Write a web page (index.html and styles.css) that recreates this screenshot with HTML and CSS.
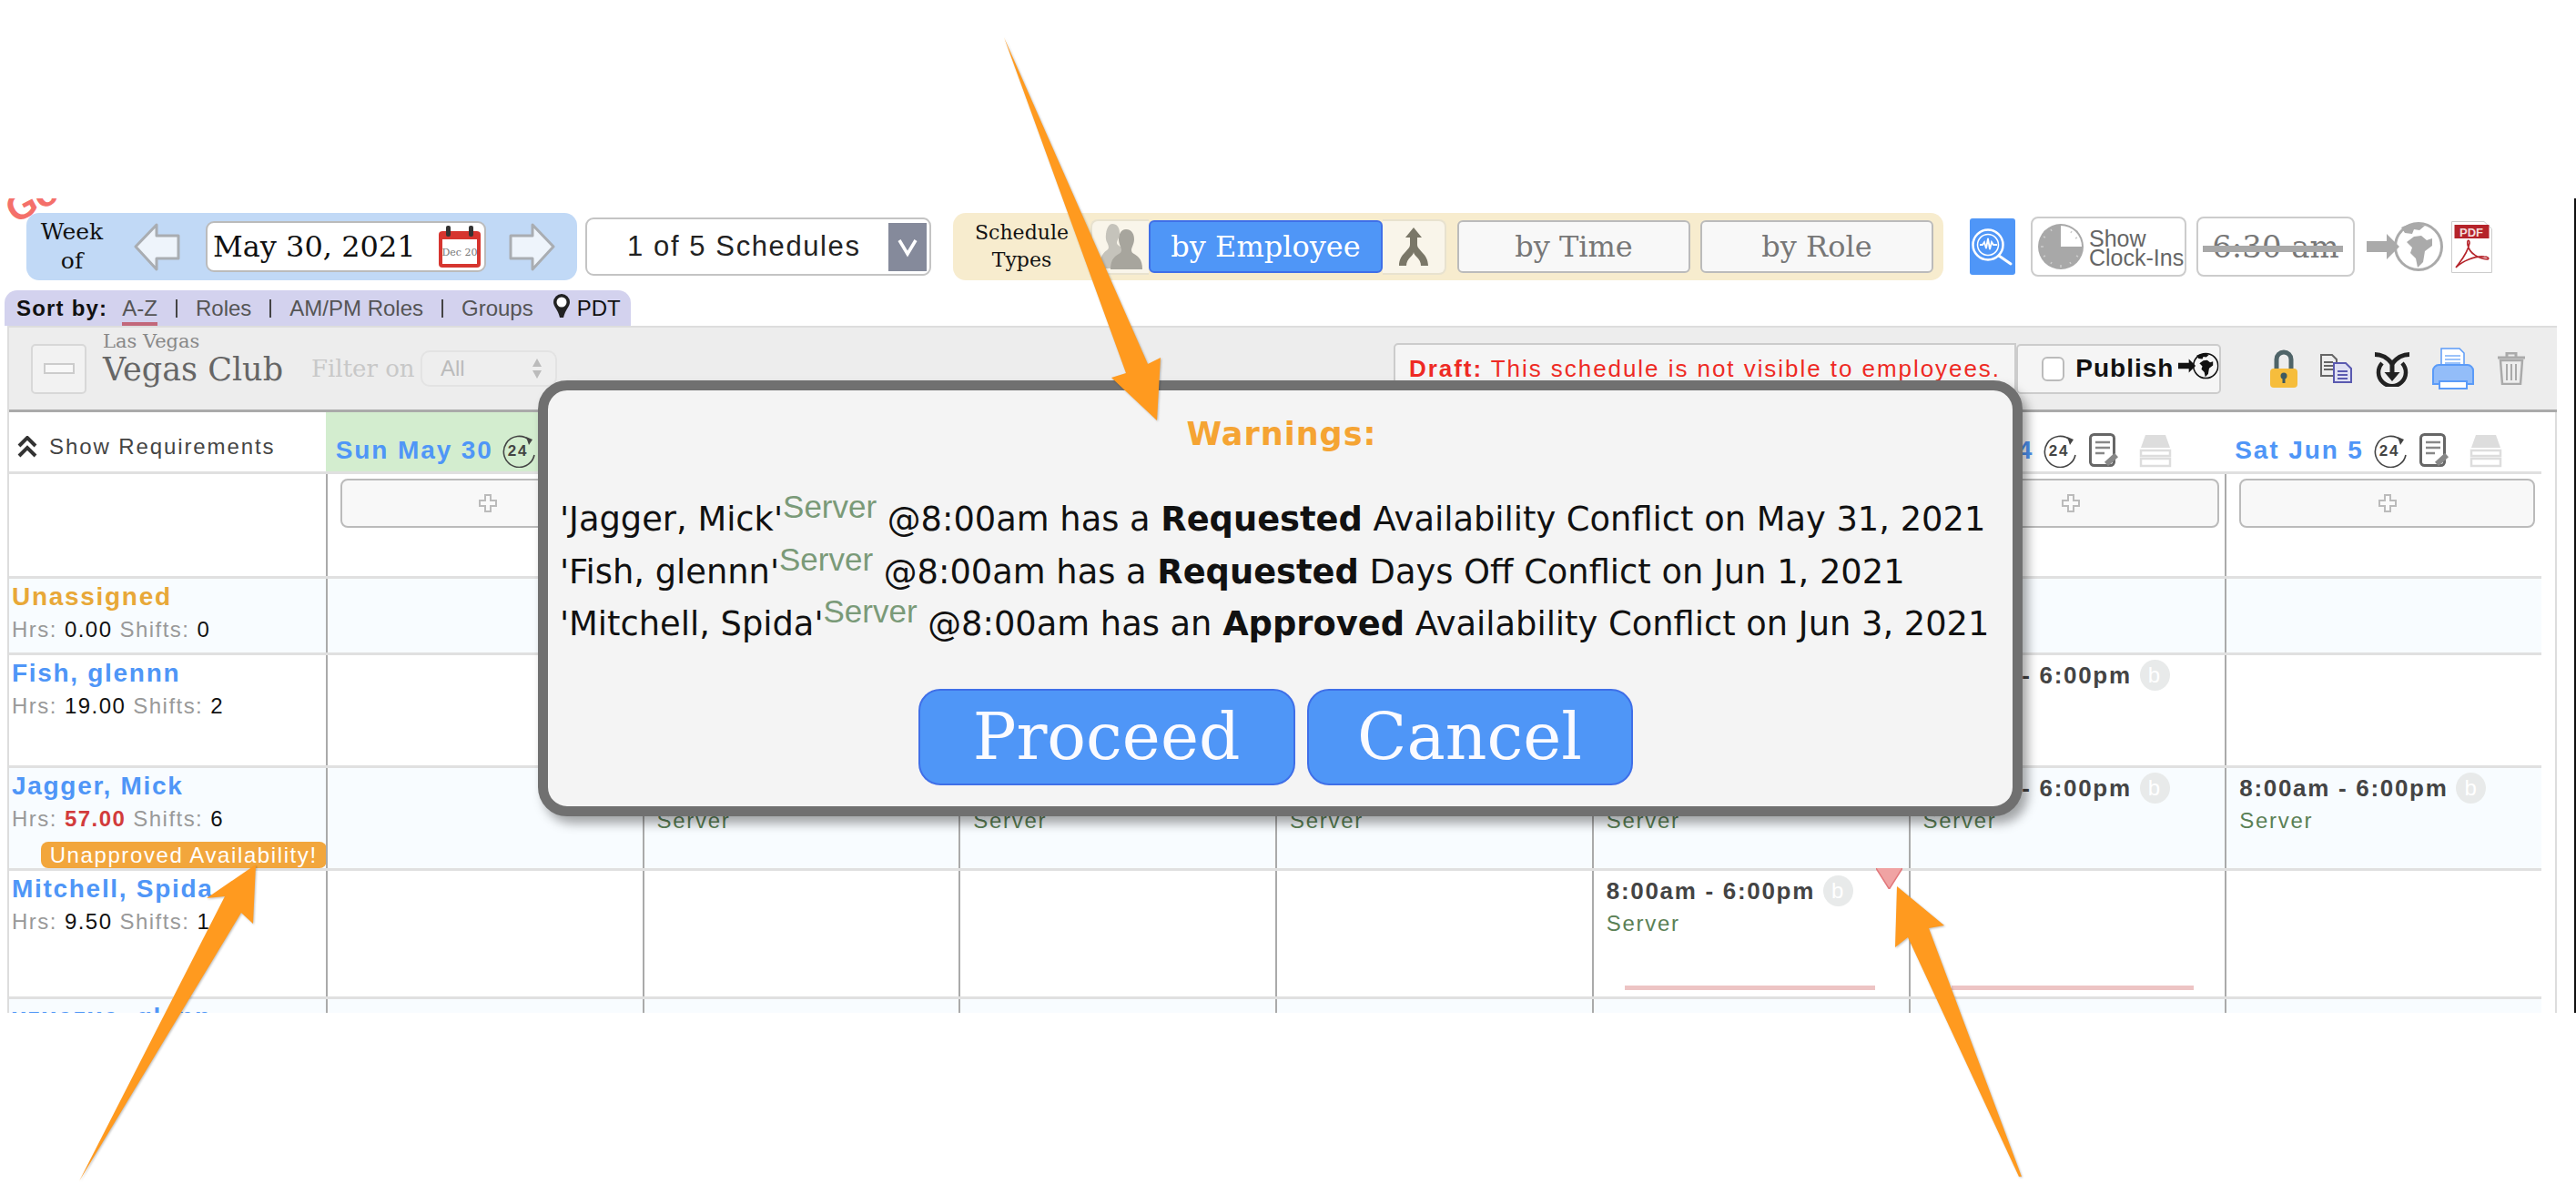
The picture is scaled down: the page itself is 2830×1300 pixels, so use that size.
FILE: index.html
```html
<!DOCTYPE html>
<html lang="en">
  <head>
    <meta charset="UTF-8" />
    <title>Schedule warnings</title>
    <link rel="stylesheet" href="styles.css">
  </head>
  <body>
    <svg class="defs" width="0" height="0">
      <defs>
        <symbol id="globe" viewBox="0 0 84 54">
          <path d="M0 21h22v-8l14 14-14 14v-8H0z" fill="currentColor" />
          <circle cx="57" cy="27" r="25.500" fill="none" stroke="currentColor" stroke-width="3" />
          <path d="M38 6c6-4 18-5 26-2l-6 5-6-1-2 5-8-1zM44 22l8-6 8-1 6 5 6-2v8l-8 6-2 12-6 6-2-10-6-6 2-6z" fill="currentColor" />
        </symbol>
        <symbol id="clock24" viewBox="0 0 38 38">
          <path d="M31 8A17 17 0 1 0 36 24" fill="none" stroke="#444" stroke-width="1.600" />
          <path d="M27 4l7 3-4 6z" fill="#444" />
          <text x="18" y="25" text-anchor="middle" class="clock-num">24</text>
        </symbol>
        <symbol id="doc" viewBox="0 0 34 38">
          <rect x="1.500" y="1.500" width="26" height="34" rx="4" fill="#fff" stroke="#666" stroke-width="3" />
          <path d="M7 10h16M7 16h16M7 22h10" stroke="#888" stroke-width="2.500" />
          <path d="M19 34l11-10" stroke="#888" stroke-width="6" />
        </symbol>
        <symbol id="stack" viewBox="0 0 36 38">
          <path d="M7 2h22l5 14H2z" fill="#ddd" />
          <path d="M2 19h32v6H2zM2 28h32v8H2z" fill="#fff" stroke="#ddd" stroke-width="2.500" />
        </symbol>
        <symbol id="plus" viewBox="0 0 22 22">
          <path d="M8 2h6v6h6v6h-6v6H8v-6H2V8h6z" fill="#fafafa" stroke="#bbb" stroke-width="2" />
        </symbol>
      </defs>
    </svg>

    <div class="app">
      <span class="logo-scrap">Go</span>

      <header class="toolbar">
        <div class="week-panel">
          <div class="week-label">Week<br />of</div>
          <svg class="week-arrow" viewBox="0 0 51 53"><path d="M25 2L2 26l23 25V39h24V14H25z" fill="#eef4fb" stroke="#a9adb2" stroke-width="3" stroke-linejoin="round" /></svg>
          <div class="date-box">
            <span>May 30, 2021</span>
            <svg class="cal-icon" viewBox="0 0 48 47">
              <rect x="1" y="6" width="46" height="40" rx="4" fill="#d6352f" />
              <rect x="5" y="15" width="38" height="27" fill="#fff" />
              <rect x="9" y="0" width="5" height="12" rx="2" fill="#333" />
              <rect x="34" y="0" width="5" height="12" rx="2" fill="#333" />
              <text x="24" y="33" text-anchor="middle" class="cal-text">Dec 20</text>
            </svg>
          </div>
          <svg class="week-arrow" viewBox="0 0 51 53"><path d="M26 2l23 24-23 25V39H2V14h24z" fill="#eef4fb" stroke="#a9adb2" stroke-width="3" stroke-linejoin="round" /></svg>
        </div>

        <div class="schedule-select">
          <span>1 of 5 Schedules</span>
          <div class="select-drop">
            <svg viewBox="0 0 24 24" width="24" height="24"><path d="M3 5l9 15 9-15" fill="none" stroke="#fff" stroke-width="3.500" /></svg>
          </div>
        </div>

        <div class="types-panel">
          <div class="types-label">Schedule<br />Types</div>
          <div class="seg seg-left">
            <svg viewBox="0 0 50 50" width="50" height="50">
              <path d="M16 0c5 0 8 4 8 10 0 5-3 8-3 11 0 3 6 4 8 8l-8 20H2c0-10 2-16 8-20 3-2 2-5 0-9-3-6 0-20 6-20z" fill="#c5c3bb" />
              <path d="M31 6c6 0 9 5 9 11 0 5-3 9-3 12 0 4 5 4 8 8 3 3 4 8 4 13H14c0-5 1-10 4-13 3-4 8-4 8-8 0-3-3-7-3-12 0-6 3-11 8-11z" fill="#a7a59d" />
            </svg>
          </div>
          <button class="type-btn type-active">by Employee</button>
          <div class="seg seg-right">
            <svg viewBox="0 0 34 42" width="34" height="42">
              <path d="M17 0l9 11h-5v8c0 6 12 10 12 23h-8c0-8-8-11-8-15 0 4-8 7-8 15H1c0-13 12-17 12-23v-8H8z" fill="#7a7768" />
            </svg>
          </div>
          <button class="type-btn type-time">by Time</button>
          <button class="type-btn">by Role</button>
        </div>

        <div class="tool-row">
          <div class="search-tile">
            <svg viewBox="0 0 50 62" width="50" height="62">
              <circle cx="20" cy="29" r="16.500" fill="none" stroke="#fff" stroke-width="2.500" />
              <circle cx="20" cy="29" r="11.500" fill="none" stroke="#fff" stroke-width="1.500" />
              <path d="M32 41l13 9" stroke="#fff" stroke-width="3" stroke-linecap="round" />
              <path d="M11 29h3l2-3 2 7 2-11 2 12 2-8 2 3h4" fill="none" stroke="#fff" stroke-width="1.800" />
            </svg>
          </div>
          <div class="clock-btn">
            <svg viewBox="0 0 52 52" width="52" height="52">
              <circle cx="26" cy="26" r="25" fill="#a8a8a8" />
              <path d="M26 3a23 23 0 0 1 23 23H26z" fill="#fff" />
              <path d="M26 46v3M4 26h3M15 7l1 2M7 15l2 1M7 37l2-1M15 45l1-2M37 45l-1-2M45 37l-2-1M38 9l-1 2M44 16l-2 1" stroke="#ccc" stroke-width="1.500" />
            </svg>
            <span class="clock-text">Show<br />Clock-Ins</span>
          </div>
          <div class="time-btn"><span>6:30 am</span></div>
          <svg class="globe-grey"><use href="#globe" /></svg>
          <svg class="pdf-icon" viewBox="0 0 45 57">
            <path d="M0.500 0.500H36l8.500 8V56.500H0.500z" fill="#fff" stroke="#ccc" />
            <rect x="3.500" y="4" width="38" height="15" fill="#b5232a" />
            <text x="22" y="16.500" text-anchor="middle" class="pdf-text">PDF</text>
            <path d="M5 51c5-7 13-15 15-27 0-4-3-4-2 2 2 10 12 15 22 16 2-1 0-3-4-3-10-1-24 5-31 12z" fill="none" stroke="#b5232a" stroke-width="1.600" />
          </svg>
        </div>
      </header>

      <nav class="sort-bar">
        <b class="sort-title">Sort by:</b>
        <a class="sort-link sort-on">A-Z</a>
        <span class="sort-sep"></span>
        <a class="sort-link">Roles</a>
        <span class="sort-sep"></span>
        <a class="sort-link">AM/PM Roles</a>
        <span class="sort-sep"></span>
        <a class="sort-link">Groups</a>
        <svg class="pin" viewBox="0 0 22 28" width="22" height="28">
          <path d="M11 1a9 9 0 0 1 9 9c0 5-5 8-7 17H9C7 18 2 15 2 10a9 9 0 0 1 9-9z" fill="#222" />
          <circle cx="11" cy="10" r="5.500" fill="#fff" />
        </svg>
        <span class="tz">PDT</span>
      </nav>

      <section class="panel">
        <div class="panel-head">
          <div class="collapse-btn"><span></span></div>
          <div class="club">
            <div class="club-city">Las Vegas</div>
            <div class="club-name">Vegas Club</div>
          </div>
          <span class="filter-label">Filter on</span>
          <div class="filter-select">
            <span>All</span>
            <svg viewBox="0 0 12 24" width="12" height="24"><path d="M6 1l5 9H1zM6 23l5-9H1z" fill="#bbb" /></svg>
          </div>
          <div class="draft-box"><b>Draft:</b> This schedule is not visible to employees.</div>
          <div class="publish-box">
            <span class="check"></span>
            <b>Publish</b>
            <svg class="globe-black"><use href="#globe" /></svg>
          </div>
          <div class="head-icons">
            <svg viewBox="0 0 30 42" width="30" height="42">
              <path d="M7 22V11a8 8 0 0 1 16 0v11" fill="none" stroke="#4f6468" stroke-width="5" />
              <rect x="0" y="21" width="30" height="21" rx="4" fill="#f6bd3c" />
              <circle cx="15" cy="29" r="3.500" fill="#3f5a60" />
              <rect x="13.500" y="29" width="3" height="8" fill="#3f5a60" />
            </svg>
            <svg viewBox="0 0 35 32" width="35" height="32">
              <path d="M1 1h12l5 5v18H1z" fill="#eee" stroke="#666" stroke-width="2" />
              <path d="M4 9h10M4 13h10M4 17h10" stroke="#666" stroke-width="2" />
              <path d="M15 10h13l6 6v15H15z" fill="#dfe0f3" stroke="#5a5ab0" stroke-width="2" />
              <path d="M19 19h11M19 23h11M19 27h11" stroke="#5a5ab0" stroke-width="2" />
            </svg>
            <svg viewBox="0 0 38 39" width="38" height="39">
              <path d="M0 3.500c8 0 13 3 19 10 6-7 11-10 19-10" fill="none" stroke="#222" stroke-width="5" />
              <path d="M8 13A15 15 0 1 0 30 13" fill="none" stroke="#222" stroke-width="4.500" />
              <path d="M16.500 12h5v11h6L19 33l-8.500-10h6z" fill="#222" />
            </svg>
            <svg viewBox="0 0 46 46" width="46" height="46">
              <path d="M10 1h20l5 5v15H10z" fill="#fff" stroke="#5b9bf8" stroke-width="1.500" />
              <path d="M14 9h17M14 13h17M14 17h17" stroke="#9cc3fa" stroke-width="2" />
              <path d="M1 25c0-3 3-6 6-6h32c3 0 6 3 6 6v15H1z" fill="#93bdf9" stroke="#5b9bf8" stroke-width="2" />
              <path d="M8 37h30v8H8z" fill="#fff" stroke="#5b9bf8" stroke-width="2" />
            </svg>
            <svg viewBox="0 0 32 36" width="32" height="36">
              <path d="M4 9h24l-2 26H6z" fill="#eee" stroke="#aaa" stroke-width="2.500" />
              <path d="M1 6h30M11 5V1h10v4" fill="none" stroke="#aaa" stroke-width="3" />
              <path d="M11 13v18M16 13v18M21 13v18" stroke="#aaa" stroke-width="2" />
            </svg>
          </div>
        </div>

        <div class="grid">
          <div class="row row-days">
            <div class="cell-req">
              <svg viewBox="0 0 22 24" width="22" height="24"><path d="M2 11l9-9 9 9M2 22l9-9 9 9" fill="none" stroke="#333" stroke-width="4" /></svg>
              Show Requirements
            </div>
            <div class="day day-today">Sun May 30 <svg class="ic-24"><use href="#clock24" /></svg></div>
            <div class="day"></div>
            <div class="day"></div>
            <div class="day"></div>
            <div class="day"></div>
            <div class="day day-fri">Fri Jun 4 <svg class="ic-24"><use href="#clock24" /></svg><svg class="ic-doc"><use href="#doc" /></svg><svg class="ic-stack"><use href="#stack" /></svg></div>
            <div class="day day-sat">Sat Jun 5 <svg class="ic-24"><use href="#clock24" /></svg><svg class="ic-doc"><use href="#doc" /></svg><svg class="ic-stack"><use href="#stack" /></svg></div>
          </div>

          <div class="row row-add">
            <div class="cell-name"></div>
            <div class="cell"><div class="add-btn"><svg width="22" height="22"><use href="#plus" /></svg></div></div>
            <div class="cell"><div class="add-btn"><svg width="22" height="22"><use href="#plus" /></svg></div></div>
            <div class="cell"><div class="add-btn"><svg width="22" height="22"><use href="#plus" /></svg></div></div>
            <div class="cell"><div class="add-btn"><svg width="22" height="22"><use href="#plus" /></svg></div></div>
            <div class="cell"><div class="add-btn"><svg width="22" height="22"><use href="#plus" /></svg></div></div>
            <div class="cell"><div class="add-btn"><svg width="22" height="22"><use href="#plus" /></svg></div></div>
            <div class="cell"><div class="add-btn"><svg width="22" height="22"><use href="#plus" /></svg></div></div>
          </div>

          <div class="row row-unassigned alt">
            <div class="cell-name"><div class="name name-open">Unassigned</div><div class="hrs">Hrs: <i>0.00</i> Shifts: <i>0</i></div></div>
            <div class="cell"></div><div class="cell"></div><div class="cell"></div><div class="cell"></div><div class="cell"></div><div class="cell"></div><div class="cell"></div>
          </div>

          <div class="row row-fish">
            <div class="cell-name"><div class="name">Fish, glennn</div><div class="hrs">Hrs: <i>19.00</i> Shifts: <i>2</i></div></div>
            <div class="cell"></div><div class="cell"></div><div class="cell"></div><div class="cell"></div>
            <div class="cell"><div class="shift">8:00am - 6:00pm <span class="brk">b</span></div><div class="role">Server</div></div>
            <div class="cell"><div class="shift">8:00am - 6:00pm <span class="brk">b</span></div></div>
            <div class="cell"></div>
          </div>

          <div class="row row-jagger alt">
            <div class="cell-name">
              <div class="name">Jagger, Mick</div><div class="hrs">Hrs: <i class="over">57.00</i> Shifts: <i>6</i></div>
              <span class="badge">Unapproved Availability!</span>
            </div>
            <div class="cell"></div>
            <div class="cell"><div class="shift">8:00am - 6:00pm <span class="brk">b</span></div><div class="role">Server</div></div>
            <div class="cell"><div class="shift">8:00am - 6:00pm <span class="brk">b</span></div><div class="role">Server</div></div>
            <div class="cell"><div class="shift">8:00am - 6:00pm <span class="brk">b</span></div><div class="role">Server</div></div>
            <div class="cell"><div class="shift">8:00am - 6:00pm <span class="brk">b</span></div><div class="role">Server</div></div>
            <div class="cell"><div class="shift">8:00am - 6:00pm <span class="brk">b</span></div><div class="role">Server</div></div>
            <div class="cell"><div class="shift">8:00am - 6:00pm <span class="brk">b</span></div><div class="role">Server</div></div>
          </div>

          <div class="row row-mitchell">
            <div class="cell-name"><div class="name">Mitchell, Spida</div><div class="hrs">Hrs: <i>9.50</i> Shifts: <i>1</i></div></div>
            <div class="cell"></div><div class="cell"></div><div class="cell"></div><div class="cell"></div>
            <div class="cell cell-flag">
              <div class="shift">8:00am - 6:00pm <span class="brk">b</span></div><div class="role">Server</div>
              <svg class="flag" viewBox="0 0 29 23"><path d="M0 0h29L14.500 23z" fill="#f0a3a3" /><path d="M0 0L14.500 23 29 0" fill="none" stroke="#e2787c" stroke-width="1.500" /></svg>
              <span class="conflict conflict-a"></span>
            </div>
            <div class="cell cell-flag"><span class="conflict conflict-b"></span></div>
            <div class="cell"></div>
          </div>

          <div class="row row-last alt">
            <div class="cell-name"><div class="name">xzxczxc, glenn</div></div>
            <div class="cell"></div><div class="cell"></div><div class="cell"></div><div class="cell"></div><div class="cell"></div><div class="cell"></div><div class="cell"></div>
          </div>
        </div>
      </section>

      <div class="modal">
        <h2 class="modal-title">Warnings:</h2>
        <p class="warn">'Jagger, Mick'<sup>Server</sup> @8:00am has a <b>Requested</b> Availability Conflict on May 31, 2021</p>
        <p class="warn">'Fish, glennn'<sup>Server</sup> @8:00am has a <b>Requested</b> Days Off Conflict on Jun 1, 2021</p>
        <p class="warn">'Mitchell, Spida'<sup>Server</sup> @8:00am has an <b>Approved</b> Availability Conflict on Jun 3, 2021</p>
        <div class="modal-actions">
          <button class="modal-btn btn-proceed">Proceed</button>
          <button class="modal-btn btn-cancel">Cancel</button>
        </div>
      </div>
    </div>

    <!-- callout arrows drawn on top of the screenshot -->
    <svg class="callouts" viewBox="0 0 2830 1300" width="2830" height="1300">
      <g fill="#ff9a1f">
        <path d="M1103 41L1261 400 1275 393 1271 462 1221 415 1237 410z" />
        <path d="M87 1298L247 985 227 987 281 950 278 1015 265 1003z" />
        <path d="M2084 974L2136 1017 2119 1020 2221 1293 2218 1293 2096 1030 2082 1041z" />
      </g>
    </svg>
  </body>
</html>
```

FILE: styles.css
```css
* {
  box-sizing: border-box;
}
html,
body {
  margin: 0;
  background: #fff;
}
body {
  position: relative;
  width: 2830px;
  height: 1300px;
  overflow: hidden;
  font-family: "Liberation Sans", Arial, sans-serif;
}
.defs {
  position: absolute;
}
.clock-num {
  font: bold 17px "Liberation Sans", sans-serif;
  fill: #444;
}
.cal-text {
  font: 11px "DejaVu Serif", serif;
  fill: #777;
}
.pdf-text {
  font: bold 13px "Liberation Sans", sans-serif;
  fill: #f3dcdc;
}

/* the app itself is only a strip of the window */
.app {
  position: relative;
  margin-top: 218px;
  height: 895px;
  overflow: hidden;
  border-right: 2px solid #111;
}
.logo-scrap {
  position: absolute;
  left: 6px;
  top: -19px;
  font: bold 42px/42px "Liberation Sans", sans-serif;
  color: #f4706a;
  transform: rotate(-28deg);
}

/* toolbar */
.toolbar {
  display: flex;
  align-items: center;
  height: 90px;
  padding: 16px 0 0 29px;
}
.week-panel {
  display: flex;
  align-items: center;
  width: 605px;
  height: 74px;
  padding-left: 13px;
  background: #c1d9f6;
  border-radius: 14px;
}
.week-label {
  width: 74px;
  font: 25px/32px "DejaVu Serif", serif;
  text-align: center;
  color: #111;
}
.week-arrow {
  width: 51px;
  height: 53px;
  margin-left: 31px;
}
.date-box + .week-arrow {
  margin-left: 25px;
}
.date-box {
  display: flex;
  align-items: center;
  justify-content: space-between;
  width: 308px;
  height: 56px;
  margin-left: 28px;
  padding: 0 3px 0 6px;
  background: #fff;
  border: 2px solid #bbb;
  border-radius: 9px;
  font: 32px "DejaVu Serif", serif;
  white-space: nowrap;
  color: #111;
}
.cal-icon {
  flex: none;
  width: 48px;
  height: 47px;
}
.schedule-select {
  display: flex;
  align-items: center;
  justify-content: space-between;
  width: 380px;
  height: 64px;
  margin-left: 9px;
  padding: 0 3px 0 44px;
  background: #fff;
  border: 2px solid #c4c4c4;
  border-radius: 9px;
  font-size: 31px;
  letter-spacing: 1.600px;
  color: #222;
}
.select-drop {
  display: flex;
  align-items: center;
  justify-content: center;
  width: 42px;
  height: 53px;
  background: #858a9b;
}
.types-panel {
  display: flex;
  align-items: center;
  width: 1088px;
  height: 74px;
  margin-left: 24px;
  background: #f7ecce;
  border-radius: 14px;
}
.types-label {
  width: 151px;
  font: 22px/30px "DejaVu Serif", serif;
  text-align: center;
  color: #111;
}
.seg {
  display: flex;
  align-items: center;
  justify-content: center;
  height: 61px;
  background: #f9f5ea;
  border: 2px solid #e8e2cf;
}
.seg-left {
  width: 64px;
  border-right: 0;
  border-radius: 8px 0 0 8px;
}
.seg-right {
  width: 70px;
  margin-right: 12px;
  border-left: 0;
  border-radius: 0 8px 8px 0;
}
.type-btn {
  width: 256px;
  height: 58px;
  padding: 0;
  background: #f8f8f8;
  border: 2px solid #bbb;
  border-radius: 6px;
  font: 32px "DejaVu Serif", serif;
  color: #777;
}
.type-time {
  margin-right: 11px;
}
.type-active {
  width: 257px;
  background: #4f96f7;
  border-color: #3f6fe8;
  color: #fff;
}
.tool-row {
  display: flex;
  align-items: center;
  margin-left: 29px;
}
.search-tile {
  width: 50px;
  height: 62px;
  margin-right: 17px;
  background: #4f96f7;
  border-radius: 3px;
}
.clock-btn {
  display: flex;
  align-items: center;
  gap: 5px;
  width: 171px;
  height: 66px;
  margin-right: 11px;
  padding-left: 5px;
  background: #fff;
  border: 2px solid #ccc;
  border-radius: 8px;
}
.clock-text {
  padding-top: 3px;
  font-size: 25px;
  line-height: 21px;
  color: #666;
}
.time-btn {
  display: flex;
  align-items: center;
  justify-content: center;
  width: 174px;
  height: 66px;
  margin-right: 13px;
  background: #fff;
  border: 2px solid #ccc;
  border-radius: 8px;
}
.time-btn span {
  position: relative;
  font: 34px "DejaVu Serif", serif;
  white-space: nowrap;
  color: #777;
}
.time-btn span::after {
  content: "";
  position: absolute;
  left: -10px;
  right: -4px;
  top: 19px;
  height: 7px;
  background: #a8a8a8;
}
.globe-grey {
  width: 84px;
  height: 54px;
  margin-right: 9px;
  color: #aaa;
}
.pdf-icon {
  width: 45px;
  height: 57px;
}

/* sort tabs */
.sort-bar {
  display: flex;
  align-items: center;
  width: 688px;
  height: 39px;
  margin: 11px 0 0 5px;
  padding-left: 13px;
  background: #d3d2ee;
  border-radius: 14px 14px 0 0;
  font-size: 24px;
}
.sort-title {
  margin-right: 16px;
  letter-spacing: 1.200px;
  color: #111;
}
.sort-link {
  color: #555;
}
.sort-on {
  position: relative;
}
.sort-on::after {
  content: "";
  position: absolute;
  left: 0;
  right: 0;
  bottom: -5px;
  height: 4px;
  background: #c2677a;
}
.sort-sep {
  width: 2px;
  height: 20px;
  margin: 0 20px;
  background: #444;
}
.pin {
  margin: -6px 0 0 20px;
}
.tz {
  margin-left: 6px;
  color: #111;
}

/* schedule panel */
.panel {
  width: 2801px;
  margin-left: 8px;
  border: 2px solid #ddd;
  border-bottom: 0;
  padding-right: 17px;
}
.panel-head {
  display: flex;
  align-items: center;
  width: 2799px;
  height: 95px;
  margin-top: -2px;
  padding-left: 24px;
  background: #ededed;
  border-top: 2px solid #ddd;
  border-bottom: 3px solid #aaa;
}
.collapse-btn {
  display: flex;
  align-items: center;
  justify-content: center;
  width: 61px;
  height: 55px;
  background: #f2f2f2;
  border: 2px solid #d8d8d8;
  border-radius: 5px;
}
.collapse-btn span {
  width: 34px;
  height: 12px;
  background: #f8f8f8;
  border: 2px solid #ccc;
}
.club {
  width: 229px;
  margin-left: 18px;
  padding-bottom: 10px;
  color: #666;
  font-family: "DejaVu Serif", serif;
}
.club-city {
  font-size: 21px;
  line-height: 24px;
  margin-top: -12px;
  color: #888;
}
.club-name {
  font-size: 35px;
  line-height: 38px;
}
.filter-label {
  width: 120px;
  font: 26px "DejaVu Serif", serif;
  white-space: nowrap;
  color: #c8c8c8;
}
.filter-select {
  display: flex;
  align-items: center;
  justify-content: space-between;
  width: 150px;
  height: 40px;
  padding: 0 14px 0 20px;
  background: #eee;
  border: 2px solid #e3e3e3;
  border-radius: 10px;
  font-size: 24px;
  color: #bbb;
}
.draft-box {
  width: 684px;
  height: 56px;
  margin-left: 919px;
  padding: 11px 0 0 15px;
  background: #f5f5f5;
  border: 2px solid #ccc;
  border-radius: 5px 0 0 5px;
  font-size: 26px;
  letter-spacing: 1.950px;
  color: #ee2a24;
  white-space: nowrap;
}
.publish-box {
  display: flex;
  align-items: center;
  width: 225px;
  height: 55px;
  padding-left: 26px;
  background: #f5f5f5;
  border: 2px solid #ccc;
  border-radius: 5px;
  font-size: 28px;
  letter-spacing: 1px;
  color: #111;
}
.check {
  width: 26px;
  height: 27px;
  margin-right: 12px;
  background: #fff;
  border: 2px solid #bbb;
  border-radius: 6px;
}
.globe-black {
  width: 46px;
  height: 30px;
  margin: -6px 0 0 5px;
  color: #111;
}
.head-icons {
  display: flex;
  align-items: center;
  gap: 25px;
  margin-left: 54px;
}

/* grid */
.grid {
  width: 2782px;
}
.row {
  display: grid;
  grid-template-columns: repeat(8, 1fr);
  border-bottom: 3px solid #e0e0e0;
}
.alt {
  background: #f8fcff;
}
.row-days {
  height: 68px;
}
.row-add {
  height: 115px;
}
.row-unassigned {
  height: 84px;
}
.row-fish {
  height: 124px;
}
.row-jagger {
  height: 113px;
}
.row-mitchell {
  height: 141px;
}
.row-last {
  height: 60px;
}
.cell-req {
  display: flex;
  align-items: center;
  gap: 13px;
  padding: 11px 0 0 9px;
  font-size: 24px;
  letter-spacing: 1.900px;
  color: #444;
  white-space: nowrap;
}
.day {
  display: flex;
  align-items: center;
  padding: 18px 0 0 11px;
  font-size: 28px;
  font-weight: bold;
  letter-spacing: 1.900px;
  color: #4f96f7;
  white-space: pre;
}
.day-today {
  background: #d3edcf;
}
.day-fri {
  padding-left: 4px;
}
.ic-24 {
  flex: none;
  width: 38px;
  height: 38px;
}
.ic-doc {
  flex: none;
  width: 34px;
  height: 38px;
  margin-left: 13px;
}
.ic-stack {
  flex: none;
  width: 36px;
  height: 38px;
  margin-left: 21px;
}
.cell,
.cell-name {
  position: relative;
  min-width: 0;
}
.cell {
  border-left: 2px solid #aaa;
  padding: 4px 0 0 14px;
}
.cell-name {
  padding: 2px 0 0 3px;
}
.add-btn {
  display: flex;
  align-items: center;
  justify-content: center;
  width: 325px;
  height: 54px;
  margin-top: 1px;
  background: #f8f8f8;
  border: 2px solid #bbb;
  border-radius: 8px;
}
.name {
  font-size: 28px;
  font-weight: bold;
  line-height: 36px;
  letter-spacing: 1.700px;
  color: #4f96f7;
  white-space: nowrap;
}
.name-open {
  color: #e8a838;
}
.hrs {
  font-size: 24px;
  line-height: 36px;
  letter-spacing: 1.450px;
  color: #999;
  white-space: nowrap;
}
.hrs i {
  font-style: normal;
  color: #111;
}
.hrs .over {
  font-weight: bold;
  color: #d23b3b;
}
.badge {
  position: absolute;
  right: -1px;
  bottom: 0;
  padding: 0 10px;
  height: 29px;
  line-height: 29px;
  background: #f2a63c;
  border-radius: 8px;
  font-size: 24px;
  letter-spacing: 1.600px;
  color: #fff;
  white-space: nowrap;
}
.shift {
  display: flex;
  align-items: center;
  height: 36px;
  font-size: 26px;
  font-weight: bold;
  letter-spacing: 1.700px;
  color: #444;
  white-space: pre;
}
.brk {
  width: 33px;
  height: 34px;
  line-height: 34px;
  border-radius: 50%;
  background: #e8eaea;
  font-size: 24px;
  font-weight: normal;
  text-align: center;
  color: #fff;
}
.role {
  font-size: 24px;
  line-height: 36px;
  letter-spacing: 1.700px;
  color: #5a8055;
}
.flag {
  position: absolute;
  right: 7px;
  top: -3px;
  width: 29px;
  height: 23px;
}
.conflict {
  position: absolute;
  top: 126px;
  height: 5px;
  background: #edc4c4;
}
.conflict-a {
  left: 34px;
  width: 275px;
}
.conflict-b {
  left: 45px;
  width: 266px;
}

/* warning dialog */
.modal {
  position: absolute;
  left: 591px;
  top: 200px;
  width: 1631px;
  height: 479px;
  padding: 20px 10px 0 13px;
  background: #f4f4f4;
  border: 11px solid #707070;
  border-radius: 32px;
  box-shadow: 6px 8px 12px rgba(0, 0, 0, 0.35);
}
.modal-title {
  margin: 0 0 37px;
  font: bold 35px/56px "DejaVu Sans", sans-serif;
  letter-spacing: 1px;
  text-align: center;
  color: #f5a433;
}
.warn {
  margin: 0;
  font: 36.800px/57.500px "DejaVu Sans", sans-serif;
  color: #111;
  white-space: nowrap;
}
.warn sup {
  font: 35px/0 "Liberation Sans", sans-serif;
  vertical-align: 14px;
  color: #7a9a78;
}
.modal-actions {
  display: flex;
  justify-content: center;
  gap: 13px;
  margin-top: 42px;
  padding-right: 14px;
}
.modal-btn {
  height: 106px;
  padding: 0;
  background: #4f96f7;
  border: 2px solid #3f6fe8;
  border-radius: 24px;
  font: 71px "DejaVu Serif", serif;
  color: #fbfbff;
}
.btn-proceed {
  width: 414px;
}
.btn-cancel {
  width: 358px;
}

/* callouts */
.callouts {
  position: absolute;
  left: 0;
  top: 0;
  filter: drop-shadow(1px 1px 1px rgba(0, 0, 0, 0.25));
}
```
